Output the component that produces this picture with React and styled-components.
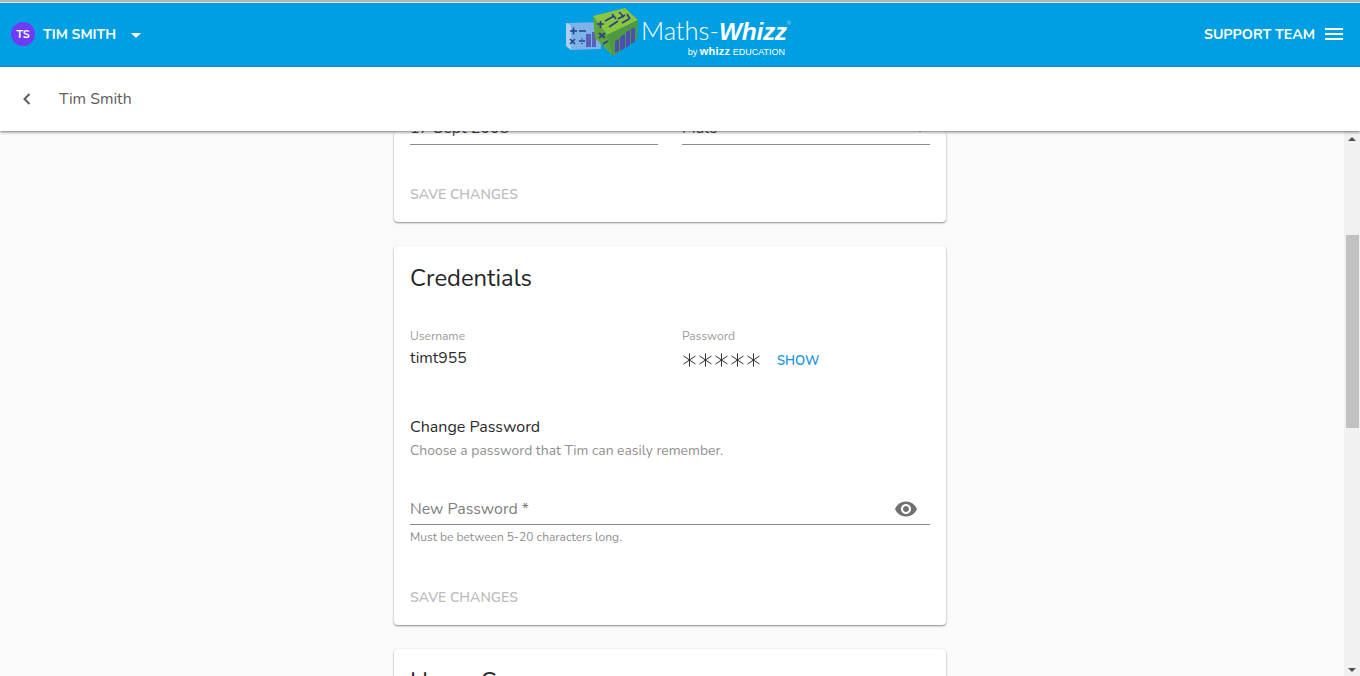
import React from "react";
import styled, { createGlobalStyle } from "styled-components";

const FONT = "Nunito, 'Noto Sans', Lato, sans-serif";

const GlobalStyle = createGlobalStyle`
  html, body {
    margin: 0;
    height: 100%;
    overflow: hidden;
    background: #fafafa;
    font-family: ${FONT};
  }
  * { box-sizing: border-box; }
`;

const Page = styled.div`
  height: 676px;
  display: flex;
  flex-direction: column;
`;

const TopEdge = styled.div`
  height: 3px;
  flex: none;
  background: linear-gradient(#b4b4b4, #b4b4b4 2px, #e6e6e6 2px);
`;

const Header = styled.header`
  height: 64px;
  flex: none;
  background: #009fe3;
  color: #fff;
  display: grid;
  grid-template-columns: 1fr auto 1fr;
  align-items: center;
  padding: 0 17px 2px 11px;
`;

const UserMenu = styled.div`
  display: flex;
  align-items: center;
`;

const Avatar = styled.div`
  width: 24px;
  height: 24px;
  border-radius: 50%;
  background: #6e3cf5;
  font-size: 11px;
  font-weight: 700;
  display: flex;
  align-items: center;
  justify-content: center;
  margin-right: 8px;
`;

const HeaderLabel = styled.span`
  font-size: 14px;
  font-weight: 700;
`;

const SupportLabel = styled(HeaderLabel)`
  font-size: 14.2px;
`;

const Caret = styled.span`
  width: 0;
  height: 0;
  margin-left: 15px;
  margin-top: 2px;
  border-left: 5px solid transparent;
  border-right: 5px solid transparent;
  border-top: 5px solid #fff;
`;

const Logo = styled.div`
  display: flex;
  align-items: center;
  padding-bottom: 4px;
  padding-left: 2px;
`;

const Wordmark = styled.div`
  display: flex;
  flex-direction: column;
  align-items: flex-end;
  margin-left: 3px;
  padding-top: 11px;
`;

const LogoName = styled.div`
  font-family: Lato, "Liberation Sans", Arial, sans-serif;
  font-size: 25.5px;
  line-height: 27px;
  font-weight: 300;
  white-space: nowrap;

  b {
    font-family: "Liberation Sans", Arial, sans-serif;
    font-size: 24.5px;
    font-style: italic;
    font-weight: 700;
    letter-spacing: -0.3px;
  }

  sup {
    font-size: 5px;
    line-height: 0;
    vertical-align: 15px;
  }
`;

const LogoSub = styled.div`
  font-family: "Liberation Sans", Arial, sans-serif;
  font-size: 9px;
  line-height: 11px;
  margin-top: 1px;
  margin-right: 6px;
  white-space: nowrap;

  b {
    font-size: 11px;
    font-weight: 700;
    letter-spacing: 0.2px;
  }
`;

const SupportMenu = styled.div`
  display: flex;
  align-items: center;
  justify-content: flex-end;
  gap: 10px;
`;

const Burger = styled.div`
  width: 18px;
  display: flex;
  flex-direction: column;
  gap: 3px;

  span {
    height: 2px;
    background: #fff;
  }
`;

const Toolbar = styled.div`
  height: 64px;
  flex: none;
  background: #fff;
  display: flex;
  align-items: center;
  padding-left: 20px;
  color: #5c5c5c;
  font-size: 15.8px;
  box-shadow: 0 1px 3px rgba(0, 0, 0, 0.55);
  position: relative;
  z-index: 2;
`;

const BackIcon = styled.svg`
  width: 14px;
  height: 14px;
  margin-right: 25px;
`;

const Body = styled.div`
  flex: 1;
  min-height: 0;
  display: flex;
`;

const Scroller = styled.main`
  flex: 1;
  min-width: 0;
  overflow: hidden;
  display: flex;
  flex-direction: column;
  align-items: center;
  gap: 24px;
`;

const Card = styled.section`
  width: 552px;
  flex: none;
  margin-right: 4px;
  background: #fff;
  border-radius: 4px;
  padding: 0 16px;
  box-shadow: 0 1px 2px rgba(0, 0, 0, 0.45), 0 0 1px rgba(0, 0, 0, 0.06);
`;

const ClippedCard = styled(Card)`
  height: 91px;
  display: flex;
  flex-direction: column;
`;

const ClippedRow = styled.div`
  display: grid;
  grid-template-columns: 1fr 1fr;
  gap: 24px;
  height: 14px;
`;

const ClippedField = styled.div`
  height: 14px;
  border-bottom: 1px solid #8c8c8c;
  color: #444;
  font-size: 16px;
  line-height: 11px;
  display: flex;
  justify-content: space-between;
  align-items: flex-end;
  overflow: hidden;

  span {
    display: block;
    margin-bottom: 10px;
  }
`;

const SelectCaret = styled.i`
  width: 0;
  height: 0;
  margin: 0 7px 12px 0;
  border-left: 3px solid transparent;
  border-right: 3px solid transparent;
  border-top: 3px solid #707070;
`;

const SaveButton = styled.div`
  font-size: 14px;
  font-weight: 600;
  color: #bdbdbd;
  line-height: 20px;
`;

const ClippedSave = styled(SaveButton)`
  margin-top: 40px;
`;

const CardTitle = styled.h2`
  margin: 0;
  padding-top: 16px;
  font-size: 23.8px;
  line-height: 32px;
  font-weight: 400;
  color: #262626;
`;

const CredentialsCard = styled(Card)`
  height: 379px;
`;

const CredentialRow = styled.div`
  display: grid;
  grid-template-columns: 1fr 1fr;
  gap: 24px;
  margin-top: 34px;
`;

const FieldLabel = styled.div`
  font-size: 12px;
  line-height: 16px;
  color: #9a9a9a;
`;

const FieldValue = styled.div`
  margin-top: 2px;
  font-size: 15.8px;
  line-height: 24px;
  color: #2b2b2b;
`;

const PasswordValue = styled.div`
  display: flex;
  align-items: center;
  height: 24px;
  margin-top: 4px;
`;

const Stars = styled.div`
  display: flex;
  gap: 3px;
  margin-left: 1px;
  margin-right: 17px;
`;

const ShowLink = styled.span`
  font-size: 13px;
  font-weight: 600;
  color: #1b95e0;
  padding-top: 2px;
`;

const SubTitle = styled.h3`
  margin: 43px 0 0;
  font-size: 16px;
  line-height: 24px;
  font-weight: 400;
  color: #2b2b2b;
`;

const SubText = styled.p`
  margin: 2px 0 0;
  font-size: 13.9px;
  line-height: 20px;
  color: #8f8f8f;
`;

const PasswordInput = styled.div`
  margin-top: 30px;
  height: 34px;
  border-bottom: 1px solid #8c8c8c;
  display: flex;
  align-items: center;
  justify-content: space-between;
  padding: 2px 12px 0 0;
  font-size: 15.9px;
  color: #7f7f7f;
`;

const HelperText = styled.div`
  margin-top: 4px;
  font-size: 12px;
  line-height: 16px;
  color: #8f8f8f;
`;

const FormSave = styled(SaveButton)`
  margin-top: 43px;
`;

const BottomCard = styled(Card)`
  height: 60px;
`;

const Scrollbar = styled.aside`
  width: 16px;
  flex: none;
  background: #f1f1f1;
  display: flex;
  flex-direction: column;
  align-items: center;
`;

const ScrollArrow = styled.span`
  width: 0;
  height: 0;
  border-left: 4px solid transparent;
  border-right: 4px solid transparent;
  ${({ $down }) => ($down ? "border-top: 4px solid #505050;" : "border-bottom: 4px solid #505050;")}
  margin-top: ${({ $down }) => ($down ? "auto" : "6px")};
  margin-bottom: ${({ $down }) => ($down ? "4px" : "0")};
`;

const ScrollThumb = styled.div`
  width: 13px;
  height: 193px;
  margin-top: 94px;
  margin-left: 1px;
  background: #c1c1c1;
`;

// five thin asterisks of the masked password
const Star = () => (
  <svg width="13" height="14" viewBox="0 0 13 14" fill="none" stroke="#333" strokeWidth="1">
    <path d="M6.5 0.5v13M0.5 3l12 8M12.5 3l-12 8" />
  </svg>
);

const Cube = () => (
  <svg width="73" height="48" viewBox="0 0 73 48">
    <path d="M1 15l34-1 1 27-30 1-5-4z" fill="#7db3e6" />
    <path d="M1 15l5 2v25l-5-4z" fill="#a9d0f2" />
    <g stroke="#25408f" strokeWidth="1.6" fill="none">
      <path d="M5 23h7M8.5 19.500v7M14 23h7M5 31l5 5M10 31l-5 5M14 33h6" />
      <path d="M17 30.500v1M17 35v1" />
    </g>
    <path d="M21 26h5v13h-5zM27 24h4v15h-4z" fill="#5a5fb8" />
    <path d="M28 8L60 0l13 12-31 15z" fill="#8cc63f" />
    <path d="M28 8l14 19 6 21-18-18z" fill="#5fa53a" />
    <path d="M42 27l31-15-1 20-24 16z" fill="#4f9a3e" />
    <g stroke="#2b3f8f" strokeWidth="1.7" fill="none">
      <path d="M40 13l9-5M44 19l9-6M47 6l4 5M54 4l5 5M53 11l7-4M57 15l7-4M62 6l3 5" />
      <path d="M32 16h7M35.500 13v7M34 25l6 5M40 25l-6 5M38 36l5-3" />
    </g>
    <path d="M50 33l4-2v12l-4 2zM55 29l5-3v14l-5 3zM61 24l4-2v15l-4 3zM66 21l4-2v15l-4 2z" fill="#4b4fb0" />
  </svg>
);

const App = () => (
  <Page>
    <GlobalStyle />
    <TopEdge />
    <Header>
      <UserMenu>
        <Avatar>TS</Avatar>
        <HeaderLabel>TIM SMITH</HeaderLabel>
        <Caret />
      </UserMenu>
      <Logo>
        <Cube />
        <Wordmark>
          <LogoName>
            Maths-<b>Whizz</b>
            <sup>®</sup>
          </LogoName>
          <LogoSub>
            by <b>whizz</b> EDUCATION
          </LogoSub>
        </Wordmark>
      </Logo>
      <SupportMenu>
        <SupportLabel>SUPPORT TEAM</SupportLabel>
        <Burger>
          <span />
          <span />
          <span />
        </Burger>
      </SupportMenu>
    </Header>
    <Toolbar>
      <BackIcon viewBox="0 0 14 14" fill="none" stroke="#5c5c5c" strokeWidth="2">
        <path d="M9.5 2L4.5 7l5 5" />
      </BackIcon>
      Tim Smith
    </Toolbar>
    <Body>
      <Scroller>
        <ClippedCard>
          <ClippedRow>
            <ClippedField>
              <span>17 Sept 2008</span>
            </ClippedField>
            <ClippedField>
              <span>Male</span>
              <SelectCaret />
            </ClippedField>
          </ClippedRow>
          <ClippedSave>SAVE CHANGES</ClippedSave>
        </ClippedCard>
        <CredentialsCard>
          <CardTitle>Credentials</CardTitle>
          <CredentialRow>
            <div>
              <FieldLabel>Username</FieldLabel>
              <FieldValue>timt955</FieldValue>
            </div>
            <div>
              <FieldLabel>Password</FieldLabel>
              <PasswordValue>
                <Stars>
                  <Star />
                  <Star />
                  <Star />
                  <Star />
                  <Star />
                </Stars>
                <ShowLink>SHOW</ShowLink>
              </PasswordValue>
            </div>
          </CredentialRow>
          <SubTitle>Change Password</SubTitle>
          <SubText>Choose a password that Tim can easily remember.</SubText>
          <PasswordInput>
            New Password *
            <svg width="24" height="24" viewBox="0 0 24 24" fill="#707070">
              <path d="M12 4.5C7 4.5 2.730 7.610 1 12c1.730 4.390 6 7.500 11 7.500s9.270-3.110 11-7.500c-1.730-4.390-6-7.500-11-7.500zM12 17c-2.760 0-5-2.240-5-5s2.240-5 5-5 5 2.240 5 5-2.240 5-5 5zm0-8c-1.660 0-3 1.340-3 3s1.340 3 3 3 3-1.340 3-3-1.340-3-3-3z" />
            </svg>
          </PasswordInput>
          <HelperText>Must be between 5-20 characters long.</HelperText>
          <FormSave>SAVE CHANGES</FormSave>
        </CredentialsCard>
        <BottomCard>
          <CardTitle>Home Care</CardTitle>
        </BottomCard>
      </Scroller>
      <Scrollbar>
        <ScrollArrow />
        <ScrollThumb />
        <ScrollArrow $down />
      </Scrollbar>
    </Body>
  </Page>
);

export default App;
